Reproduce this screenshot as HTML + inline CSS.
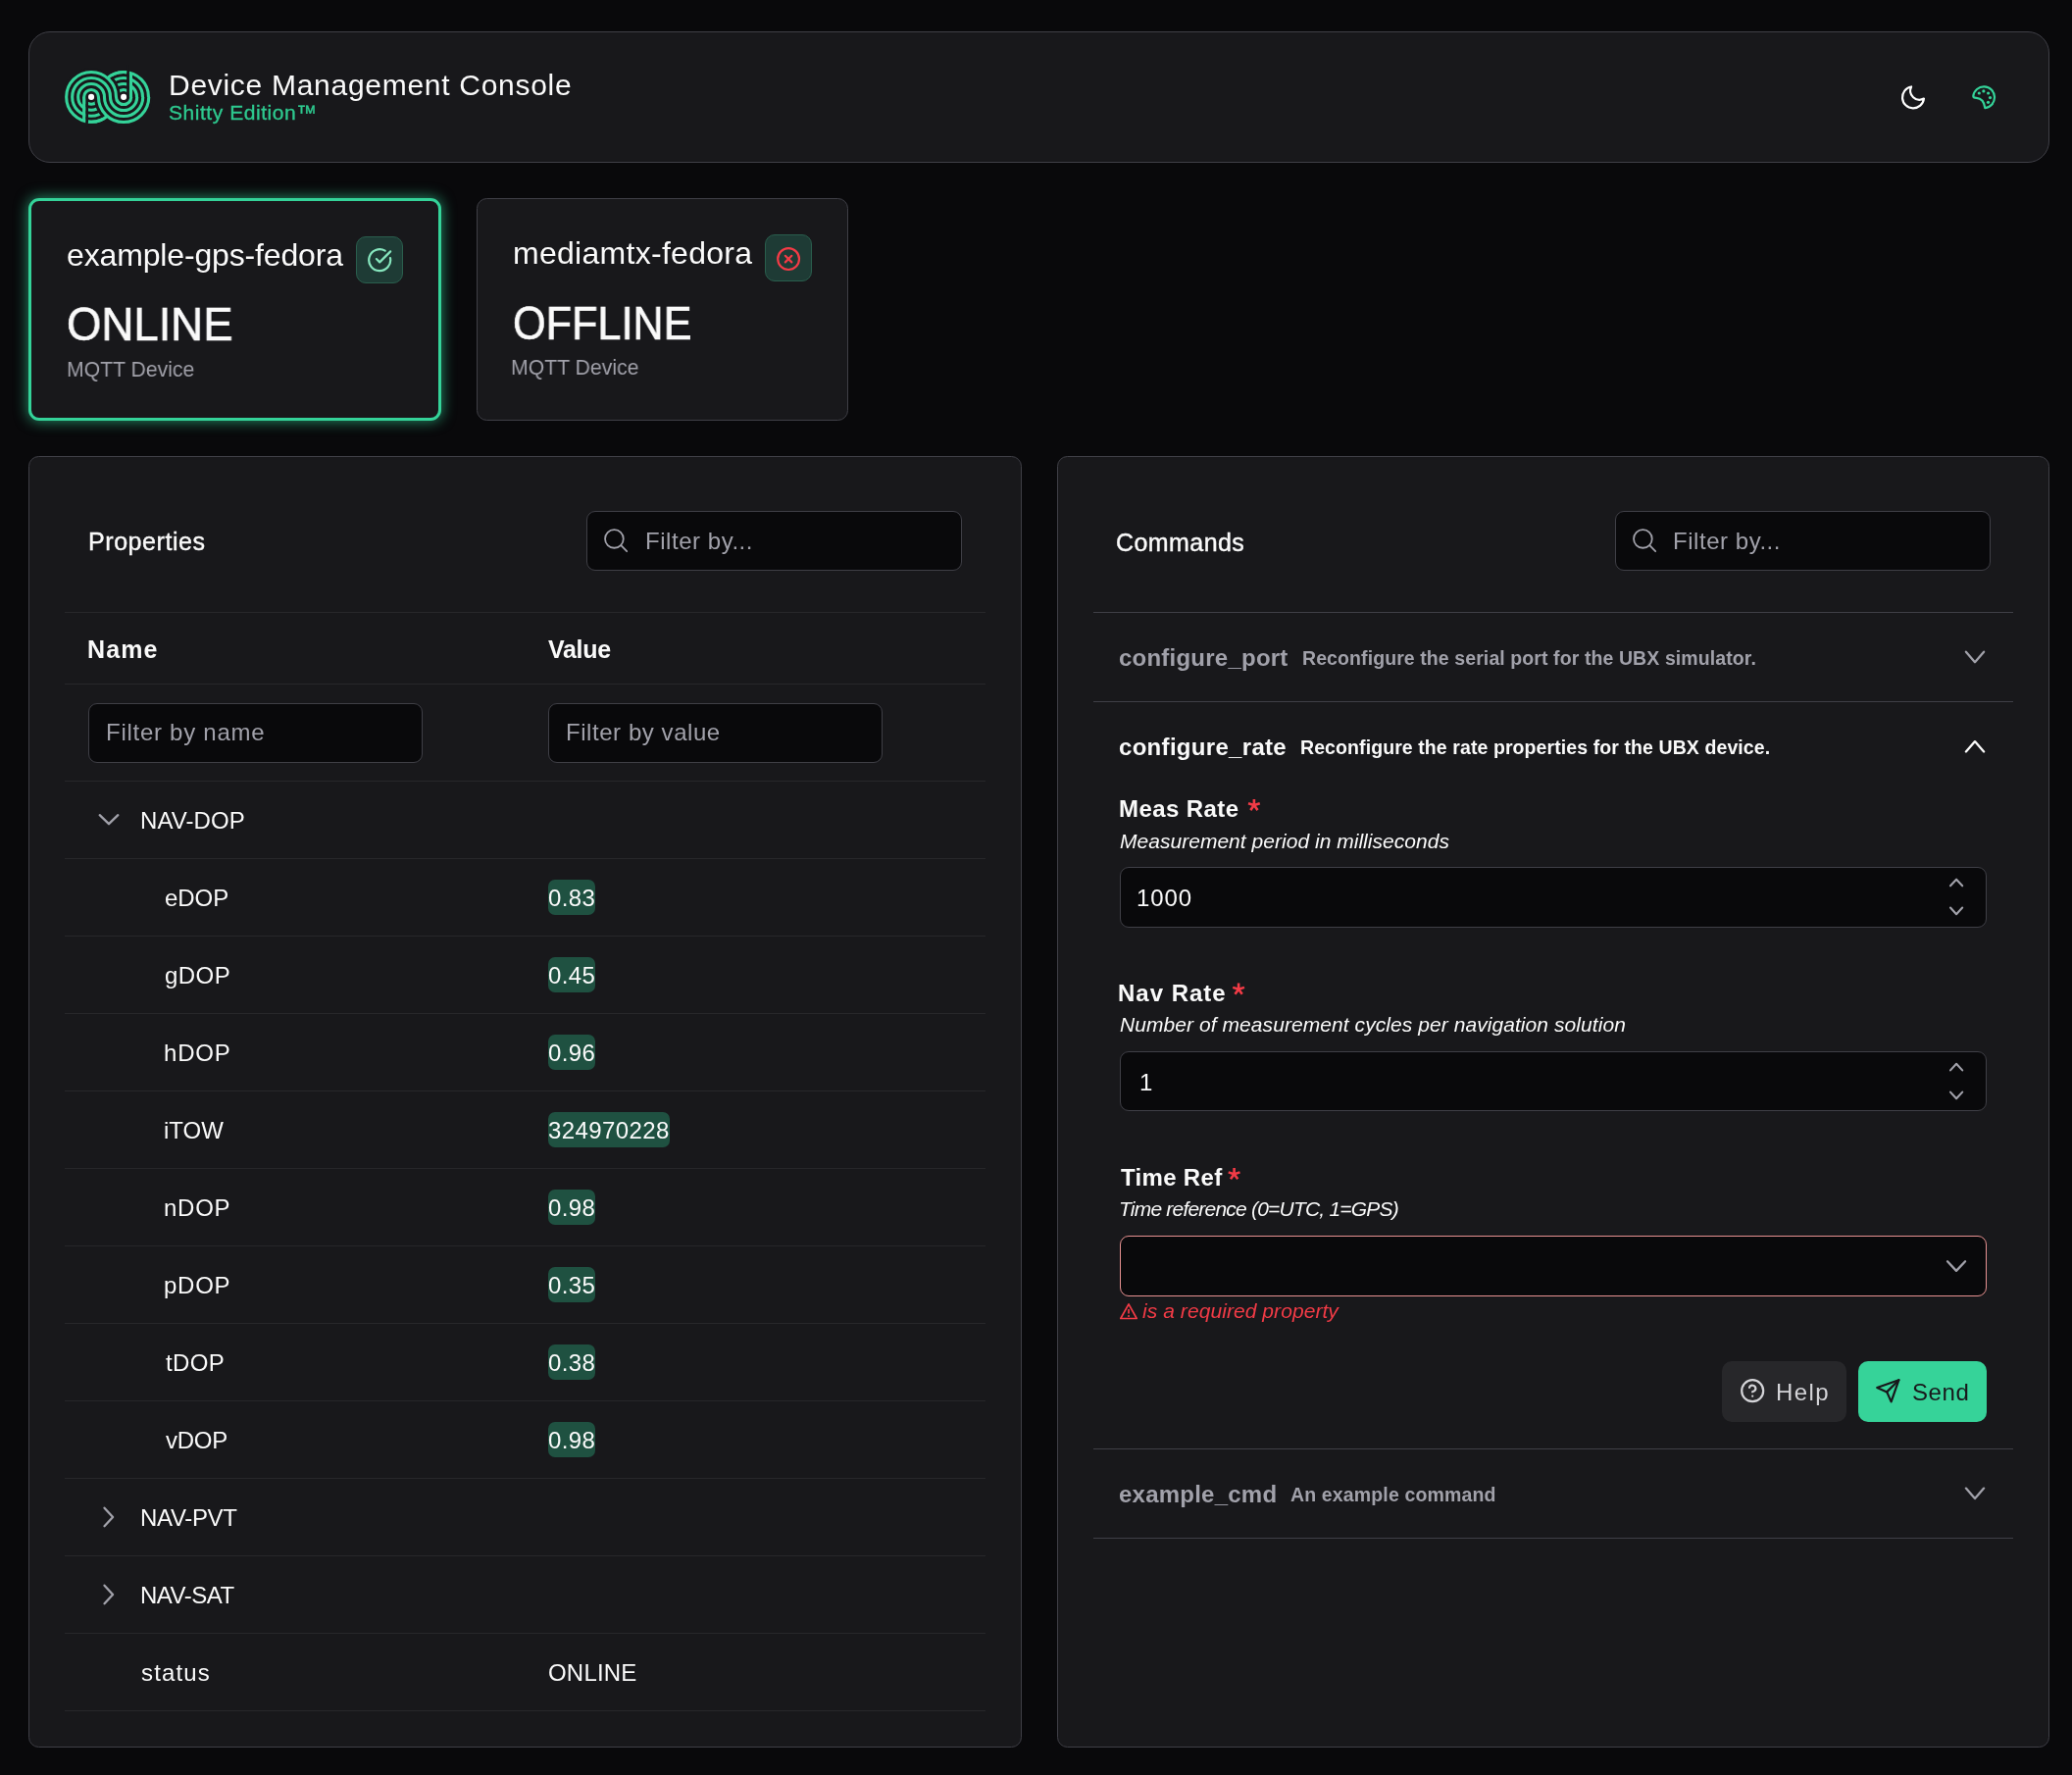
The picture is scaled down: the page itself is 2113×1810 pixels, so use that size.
<!DOCTYPE html>
<html><head><meta charset="utf-8"><title>Device Management Console</title>
<style>
html,body{margin:0;padding:0;}
body{width:2113px;height:1810px;background:#09090b;position:relative;overflow:hidden;font-family:"Liberation Sans",sans-serif;}
.b{position:absolute;}
.t{position:absolute;white-space:nowrap;line-height:1;will-change:transform;}
</style></head><body>
<div class="b" style="left:29px;top:32px;width:2061px;height:133.5px;background:#18181b;border:1px solid #3f3f46;border-radius:22px;box-sizing:border-box;"></div><svg class="b" style="left:60px;top:66px" width="100" height="66" viewBox="0 0 100 66">
<g fill="none" stroke="#34d399" stroke-width="3.1"><path d="M25.66 32.9 A7.4 7.4 0 0 0 40.46 32.9" /><path d="M58.70 32.9 A7.4 7.4 0 0 1 73.50 32.9" /><path d="M19.66 32.9 A13.4 13.4 0 0 0 46.46 32.9" /><path d="M52.70 32.9 A13.4 13.4 0 0 1 79.50 32.9" /><path d="M13.66 32.9 A19.4 19.4 0 0 0 52.46 32.9" /><path d="M46.70 32.9 A19.4 19.4 0 0 1 85.50 32.9" /><path d="M7.66 32.9 A25.4 25.4 0 0 0 58.46 32.9" /><path d="M40.70 32.9 A25.4 25.4 0 0 1 91.50 32.9" /></g>
<rect x="27.21" y="32.9" width="2.8" height="30" fill="#18181b"/>
<rect x="69.15" y="0" width="2.8" height="32.9" fill="#18181b"/>
<g fill="none" stroke="#18181b" stroke-width="8.7"><path d="M25.66 32.9 A7.4 7.4 0 0 1 40.46 32.9 A25.64 25.64 0 0 0 91.74 32.9" /><path d="M19.66 32.9 A13.4 13.4 0 0 1 46.46 32.9 A19.64 19.64 0 0 0 85.74 32.9" /><path d="M13.66 32.9 A19.4 19.4 0 0 1 52.46 32.9 A13.64 13.64 0 0 0 79.74 32.9" /><path d="M7.66 32.9 A25.4 25.4 0 0 1 58.46 32.9 A7.64 7.64 0 0 0 73.74 32.9" /></g>
<g fill="none" stroke="#34d399" stroke-width="3.1"><path d="M25.66 32.9 A7.4 7.4 0 0 1 40.46 32.9 A25.64 25.64 0 0 0 91.74 32.9" /><path d="M19.66 32.9 A13.4 13.4 0 0 1 46.46 32.9 A19.64 19.64 0 0 0 85.74 32.9" /><path d="M13.66 32.9 A19.4 19.4 0 0 1 52.46 32.9 A13.64 13.64 0 0 0 79.74 32.9" /><path d="M7.66 32.9 A25.4 25.4 0 0 1 58.46 32.9 A7.64 7.64 0 0 0 73.74 32.9" />
<path d="M25.66 32.9 V57.5"/><path d="M73.50 32.9 V8.3"/>
<path d="M49.58 13.6 A25.4 25.4 0 0 1 69.15 7.68"/><path d="M30.0 58.1 A25.4 25.4 0 0 0 49.58 52.2"/></g>
<circle cx="33.06" cy="32.9" r="3.05" fill="#fff"/><circle cx="66.1" cy="32.9" r="3.05" fill="#fff"/>
</svg><svg class="b" style="left:1933px;top:81px" width="36" height="36" viewBox="0 0 36 36"><path d="M16.07 7.46 A9.3 9.3 0 0 0 28.93 19.58 A11 11 0 1 1 16.07 7.46 Z" fill="none" stroke="#fff" stroke-width="2.2" stroke-linejoin="round"/></svg><svg class="b" style="left:2005px;top:81px" width="36" height="36" viewBox="0 0 36 36"><g fill="none" stroke="#34d399" stroke-width="2.2" stroke-linejoin="round" stroke-linecap="round"><path d="M7.3 17 A10.9 10.9 0 1 1 19.3 29.1 C18.6 23.5 15.5 19.3 10.5 18.9 C8.5 18.8 7.3 18.5 7.3 17 Z"/></g>
<g fill="#34d399"><circle cx="13.3" cy="14" r="1.6"/><circle cx="17.85" cy="11.9" r="1.6"/><circle cx="22.6" cy="14" r="1.6"/><circle cx="24.5" cy="18.6" r="1.6"/><circle cx="22.5" cy="23.3" r="1.6"/></g></svg><div class="b" style="left:29px;top:201.5px;width:421px;height:227.5px;background:#18181b;border:3px solid #34d399;border-radius:11px;box-sizing:border-box;box-shadow:0 0 14px 1px rgba(52,211,153,0.6);"></div><div class="b" style="left:486px;top:202px;width:379px;height:226.5px;background:#18181b;border:1px solid #3f3f46;border-radius:10.5px;box-sizing:border-box;"></div><div class="b" style="left:363px;top:241px;width:48px;height:48px;background:#1e3b35;border:1px solid #2a5e4d;border-radius:10px;box-sizing:border-box;"></div><svg class="b" style="left:373.7px;top:252.4px" width="26.4" height="26.4" viewBox="0 0 24 24"><g fill="none" stroke="#86e5bd" stroke-width="2" stroke-linecap="round" stroke-linejoin="round"><path d="M21.801 10A10 10 0 1 1 17 3.335"/><path d="m9 11 3 3L22 4"/></g></svg><div class="b" style="left:780px;top:239px;width:48px;height:48px;background:#1e3b35;border:1px solid #2a5e4d;border-radius:10px;box-sizing:border-box;"></div><svg class="b" style="left:791.2px;top:250.7px" width="26.2" height="26.2" viewBox="0 0 24 24"><g fill="none" stroke="#f23b46" stroke-width="2" stroke-linecap="round" stroke-linejoin="round"><circle cx="12" cy="12" r="10"/><path d="m15 9-6 6"/><path d="m9 9 6 6"/></g></svg><div class="b" style="left:29px;top:465px;width:1013px;height:1316.5px;background:#18181b;border:1px solid #3f3f46;border-radius:10.5px;box-sizing:border-box;"></div><div class="b" style="left:1078px;top:465px;width:1012px;height:1316.5px;background:#18181b;border:1px solid #3f3f46;border-radius:10.5px;box-sizing:border-box;"></div><div class="b" style="left:598px;top:520.5px;width:383px;height:61.5px;background:#09090b;border:1px solid #3f3f46;border-radius:9px;box-sizing:border-box;"></div><svg class="b" style="left:598px;top:520.5px" width="60" height="60" viewBox="0 0 60 60"><g fill="none" stroke="#a1a1aa" stroke-width="1.8" stroke-linecap="round"><circle cx="28.399999999999977" cy="28.399999999999977" r="9.35"/><path d="M35.299999999999955 35.200000000000045 L41.200000000000045 41.200000000000045"/></g></svg><div class="b" style="left:1647px;top:520.5px;width:383px;height:61.5px;background:#09090b;border:1px solid #3f3f46;border-radius:9px;box-sizing:border-box;"></div><svg class="b" style="left:1647px;top:520.5px" width="60" height="60" viewBox="0 0 60 60"><g fill="none" stroke="#a1a1aa" stroke-width="1.8" stroke-linecap="round"><circle cx="28.399999999999977" cy="28.399999999999977" r="9.35"/><path d="M35.299999999999955 35.200000000000045 L41.200000000000045 41.200000000000045"/></g></svg><div class="b" style="left:66px;top:624px;width:939px;height:1px;background:#27272a;"></div><div class="b" style="left:66px;top:697px;width:939px;height:1px;background:#27272a;"></div><div class="b" style="left:90px;top:716.5px;width:340.5px;height:61.0px;background:#09090b;border:1px solid #3f3f46;border-radius:9px;box-sizing:border-box;"></div><div class="b" style="left:559px;top:716.5px;width:340.5px;height:61.0px;background:#09090b;border:1px solid #3f3f46;border-radius:9px;box-sizing:border-box;"></div><div class="b" style="left:66px;top:796.2px;width:939px;height:1.0px;background:#27272a;"></div><div class="b" style="left:66px;top:875.2px;width:939px;height:1.0px;background:#27272a;"></div><div class="b" style="left:66px;top:954.2px;width:939px;height:1.0px;background:#27272a;"></div><div class="b" style="left:66px;top:1033.2px;width:939px;height:1.0px;background:#27272a;"></div><div class="b" style="left:66px;top:1112.2px;width:939px;height:1.0px;background:#27272a;"></div><div class="b" style="left:66px;top:1191.2px;width:939px;height:1.0px;background:#27272a;"></div><div class="b" style="left:66px;top:1270.2px;width:939px;height:1.0px;background:#27272a;"></div><div class="b" style="left:66px;top:1349.2px;width:939px;height:1.0px;background:#27272a;"></div><div class="b" style="left:66px;top:1428.2px;width:939px;height:1.0px;background:#27272a;"></div><div class="b" style="left:66px;top:1507.2px;width:939px;height:1.0px;background:#27272a;"></div><div class="b" style="left:66px;top:1586.2px;width:939px;height:1.0px;background:#27272a;"></div><div class="b" style="left:66px;top:1665.2px;width:939px;height:1.0px;background:#27272a;"></div><div class="b" style="left:66px;top:1744.2px;width:939px;height:1.0px;background:#27272a;"></div><svg class="b" style="left:0;top:0;overflow:visible" width="1" height="1"><path d="M101.70 831.20 L111.00 840.20 L120.30 831.20" fill="none" stroke="#a1a1aa" stroke-width="2.3" stroke-linecap="round" stroke-linejoin="round"/></svg><svg class="b" style="left:0;top:0;overflow:visible" width="1" height="1"><path d="M106.50 1537.70 L115.10 1547.00 L106.50 1556.20" fill="none" stroke="#a1a1aa" stroke-width="2.3" stroke-linecap="round" stroke-linejoin="round"/></svg><svg class="b" style="left:0;top:0;overflow:visible" width="1" height="1"><path d="M106.50 1616.70 L115.10 1626.00 L106.50 1635.20" fill="none" stroke="#a1a1aa" stroke-width="2.3" stroke-linecap="round" stroke-linejoin="round"/></svg><div class="b" style="left:559px;top:896.8000000000001px;width:48px;height:36.0px;background:#1f5141;border-radius:7px;"></div><div class="b" style="left:559px;top:975.8000000000001px;width:48px;height:36.0px;background:#1f5141;border-radius:7px;"></div><div class="b" style="left:559px;top:1054.8px;width:48px;height:36.0px;background:#1f5141;border-radius:7px;"></div><div class="b" style="left:559px;top:1133.8px;width:124px;height:36.0px;background:#1f5141;border-radius:7px;"></div><div class="b" style="left:559px;top:1212.8px;width:48px;height:36.0px;background:#1f5141;border-radius:7px;"></div><div class="b" style="left:559px;top:1291.8px;width:48px;height:36.0px;background:#1f5141;border-radius:7px;"></div><div class="b" style="left:559px;top:1370.8px;width:48px;height:36.0px;background:#1f5141;border-radius:7px;"></div><div class="b" style="left:559px;top:1449.8px;width:48px;height:36.0px;background:#1f5141;border-radius:7px;"></div><div class="b" style="left:1115px;top:624px;width:938px;height:1px;background:#3f3f46;"></div><div class="b" style="left:1115px;top:715.3px;width:938px;height:1.0px;background:#3f3f46;"></div><div class="b" style="left:1115px;top:1477px;width:938px;height:1px;background:#3f3f46;"></div><div class="b" style="left:1115px;top:1568.4px;width:938px;height:1.0px;background:#3f3f46;"></div><svg class="b" style="left:0;top:0;overflow:visible" width="1" height="1"><path d="M2004.90 664.70 L2014.00 675.20 L2023.10 664.70" fill="none" stroke="#a1a1aa" stroke-width="2.3" stroke-linecap="round" stroke-linejoin="round"/></svg><svg class="b" style="left:0;top:0;overflow:visible" width="1" height="1"><path d="M2004.90 766.50 L2014.00 756.10 L2023.10 766.50" fill="none" stroke="#fafafa" stroke-width="2.3" stroke-linecap="round" stroke-linejoin="round"/></svg><svg class="b" style="left:0;top:0;overflow:visible" width="1" height="1"><path d="M2004.90 1517.60 L2014.00 1528.10 L2023.10 1517.60" fill="none" stroke="#a1a1aa" stroke-width="2.3" stroke-linecap="round" stroke-linejoin="round"/></svg><div class="b" style="left:1142px;top:884.2px;width:884px;height:61.39999999999998px;background:#09090b;border:1px solid #3f3f46;border-radius:9px;box-sizing:border-box;"></div><svg class="b" style="left:0;top:0;overflow:visible" width="1" height="1"><path d="M1989.00 903.30 L1995.10 896.70 L2001.20 903.30" fill="none" stroke="#a1a1aa" stroke-width="2.1" stroke-linecap="round" stroke-linejoin="round"/></svg><svg class="b" style="left:0;top:0;overflow:visible" width="1" height="1"><path d="M1989.00 925.50 L1995.10 932.20 L2001.20 925.50" fill="none" stroke="#a1a1aa" stroke-width="2.1" stroke-linecap="round" stroke-linejoin="round"/></svg><div class="b" style="left:1142px;top:1072.3px;width:884px;height:61.200000000000045px;background:#09090b;border:1px solid #3f3f46;border-radius:9px;box-sizing:border-box;"></div><svg class="b" style="left:0;top:0;overflow:visible" width="1" height="1"><path d="M1989.00 1091.40 L1995.10 1084.80 L2001.20 1091.40" fill="none" stroke="#a1a1aa" stroke-width="2.1" stroke-linecap="round" stroke-linejoin="round"/></svg><svg class="b" style="left:0;top:0;overflow:visible" width="1" height="1"><path d="M1989.00 1113.60 L1995.10 1120.30 L2001.20 1113.60" fill="none" stroke="#a1a1aa" stroke-width="2.1" stroke-linecap="round" stroke-linejoin="round"/></svg><div class="b" style="left:1142px;top:1260.2px;width:884px;height:61.59999999999991px;background:#09090b;border:1px solid #e79191;border-radius:9px;box-sizing:border-box;"></div><svg class="b" style="left:0;top:0;overflow:visible" width="1" height="1"><path d="M1986.00 1286.30 L1995.00 1295.90 L2004.10 1286.30" fill="none" stroke="#a1a1aa" stroke-width="2.3" stroke-linecap="round" stroke-linejoin="round"/></svg><svg class="b" style="left:1140px;top:1327px" width="22" height="20" viewBox="0 0 22 20"><g fill="none" stroke="#f23b46" stroke-width="1.7" stroke-linejoin="round"><path d="M11 2.8 L19.2 17.5 H2.8 Z"/></g><path d="M11 8 V12.5" stroke="#f23b46" stroke-width="1.7"/><circle cx="11" cy="14.9" r="1" fill="#f23b46"/></svg><div class="b" style="left:1756.2px;top:1388px;width:126.79999999999995px;height:62px;background:#27272a;border-radius:10px;"></div><svg class="b" style="left:1773.9px;top:1405.2px" width="26.4" height="26.4" viewBox="0 0 24 24"><g fill="none" stroke="#d4d4d8" stroke-width="2" stroke-linecap="round" stroke-linejoin="round"><circle cx="12" cy="12" r="10"/><path d="M9.09 9a3 3 0 0 1 5.83 1c0 2-3 3-3 3"/><path d="M12 17h.01"/></g></svg><div class="b" style="left:1895px;top:1388px;width:131px;height:62px;background:#36d399;border-radius:10px;"></div><svg class="b" style="left:1912.2px;top:1404.9px" width="26.6" height="26.6" viewBox="0 0 24 24"><g fill="none" stroke="#18181b" stroke-width="2" stroke-linecap="round" stroke-linejoin="round"><path d="m22 2-7 20-4-9-9-4Z"/><path d="M22 2 11 13"/></g></svg><div class="t" id="title" style="left:172.20px;top:72.00px;font-size:30px;color:#fafafa;letter-spacing:0.712px;">Device Management Console</div><div class="t" id="sub" style="left:171.80px;top:103.75px;font-size:21px;color:#2ec98f;letter-spacing:0.543px;-webkit-text-stroke:0.35px #2ec98f;">Shitty Edition™</div><div class="t" id="d1name" style="left:68.00px;top:244.10px;font-size:32px;color:#fafafa;letter-spacing:-0.153px;">example-gps-fedora</div><div class="t" id="d1stat" style="left:68.40px;top:306.93px;font-size:47.5px;color:#fafafa;-webkit-text-stroke:0.7px #fafafa;transform:scaleX(0.9584);transform-origin:0 0;">ONLINE</div><div class="t" id="d1type" style="left:67.60px;top:365.68px;font-size:22.5px;color:#a1a1aa;transform:scaleX(0.9423);transform-origin:0 0;">MQTT Device</div><div class="t" id="d2name" style="left:523.20px;top:242.00px;font-size:32px;color:#fafafa;letter-spacing:0.286px;">mediamtx-fedora</div><div class="t" id="d2stat" style="left:523.20px;top:305.73px;font-size:47.5px;color:#fafafa;-webkit-text-stroke:0.7px #fafafa;transform:scaleX(0.9097);transform-origin:0 0;">OFFLINE</div><div class="t" id="d2type" style="left:521.40px;top:363.68px;font-size:22.5px;color:#a1a1aa;transform:scaleX(0.9437);transform-origin:0 0;">MQTT Device</div><div class="t" id="props" style="left:89.50px;top:540.35px;font-size:25px;color:#fafafa;letter-spacing:0.567px;-webkit-text-stroke:0.4px #fafafa;">Properties</div><div class="t" id="filt1" style="left:658.40px;top:540.20px;font-size:24px;color:#a1a1aa;letter-spacing:0.536px;">Filter by...</div><div class="t" id="hname" style="left:89.20px;top:649.55px;font-size:25px;color:#fafafa;font-weight:700;letter-spacing:1.133px;">Name</div><div class="t" id="hval" style="left:559.40px;top:649.55px;font-size:25px;color:#fafafa;font-weight:700;letter-spacing:-0.300px;">Value</div><div class="t" id="fname" style="left:108.00px;top:735.40px;font-size:24px;color:#a1a1aa;letter-spacing:0.731px;">Filter by name</div><div class="t" id="fval" style="left:576.80px;top:735.40px;font-size:24px;color:#a1a1aa;letter-spacing:0.557px;">Filter by value</div><div class="t" id="navdop" style="left:143.20px;top:825.20px;font-size:24px;color:#fafafa;letter-spacing:0.083px;">NAV-DOP</div><div class="t" id="r_eDOP" style="left:167.60px;top:904.00px;font-size:24px;color:#fafafa;letter-spacing:-0.067px;">eDOP</div><div class="t" id="v_eDOP" style="left:559.00px;top:904.00px;font-size:24px;color:#fafafa;letter-spacing:0.367px;">0.83</div><div class="t" id="r_gDOP" style="left:167.60px;top:983.00px;font-size:24px;color:#fafafa;letter-spacing:0.467px;">gDOP</div><div class="t" id="v_gDOP" style="left:559.00px;top:983.00px;font-size:24px;color:#fafafa;letter-spacing:0.367px;">0.45</div><div class="t" id="r_hDOP" style="left:166.60px;top:1062.00px;font-size:24px;color:#fafafa;letter-spacing:0.800px;">hDOP</div><div class="t" id="v_hDOP" style="left:559.00px;top:1062.00px;font-size:24px;color:#fafafa;letter-spacing:0.367px;">0.96</div><div class="t" id="r_iTOW" style="left:166.60px;top:1141.00px;font-size:24px;color:#fafafa;">iTOW</div><div class="t" id="v_iTOW" style="left:559.00px;top:1141.00px;font-size:24px;color:#fafafa;letter-spacing:0.388px;">324970228</div><div class="t" id="r_nDOP" style="left:166.60px;top:1220.00px;font-size:24px;color:#fafafa;letter-spacing:0.733px;">nDOP</div><div class="t" id="v_nDOP" style="left:559.00px;top:1220.00px;font-size:24px;color:#fafafa;letter-spacing:0.367px;">0.98</div><div class="t" id="r_pDOP" style="left:166.60px;top:1299.00px;font-size:24px;color:#fafafa;letter-spacing:0.733px;">pDOP</div><div class="t" id="v_pDOP" style="left:559.00px;top:1299.00px;font-size:24px;color:#fafafa;letter-spacing:0.367px;">0.35</div><div class="t" id="r_tDOP" style="left:168.60px;top:1378.00px;font-size:24px;color:#fafafa;letter-spacing:0.400px;">tDOP</div><div class="t" id="v_tDOP" style="left:559.00px;top:1378.00px;font-size:24px;color:#fafafa;letter-spacing:0.367px;">0.38</div><div class="t" id="r_vDOP" style="left:168.60px;top:1457.00px;font-size:24px;color:#fafafa;letter-spacing:-0.267px;">vDOP</div><div class="t" id="v_vDOP" style="left:559.00px;top:1457.00px;font-size:24px;color:#fafafa;letter-spacing:0.367px;">0.98</div><div class="t" id="navpvt" style="left:142.70px;top:1536.00px;font-size:24px;color:#fafafa;letter-spacing:-0.333px;">NAV-PVT</div><div class="t" id="navsat" style="left:142.70px;top:1615.00px;font-size:24px;color:#fafafa;letter-spacing:-0.500px;">NAV-SAT</div><div class="t" id="status" style="left:143.70px;top:1694.00px;font-size:24px;color:#fafafa;letter-spacing:1.160px;">status</div><div class="t" id="statusv" style="left:558.60px;top:1694.00px;font-size:24px;color:#fafafa;letter-spacing:0.200px;">ONLINE</div><div class="t" id="cmds" style="left:1138.00px;top:540.75px;font-size:25px;color:#fafafa;letter-spacing:0.429px;-webkit-text-stroke:0.4px #fafafa;">Commands</div><div class="t" id="filt2" style="left:1706.40px;top:540.20px;font-size:24px;color:#a1a1aa;letter-spacing:0.536px;">Filter by...</div><div class="t" id="c1" style="left:1141.00px;top:659.20px;font-size:24px;color:#a1a1aa;font-weight:700;letter-spacing:0.231px;">configure_port</div><div class="t" id="c1d" style="left:1327.80px;top:661.92px;font-size:19.5px;color:#a1a1aa;font-weight:700;letter-spacing:0.092px;">Reconfigure the serial port for the UBX simulator.</div><div class="t" id="c2" style="left:1141.00px;top:750.10px;font-size:24px;color:#fafafa;font-weight:700;letter-spacing:0.308px;">configure_rate</div><div class="t" id="c2d" style="left:1326.20px;top:752.62px;font-size:19.5px;color:#fafafa;font-weight:700;letter-spacing:0.090px;">Reconfigure the rate properties for the UBX device.</div><div class="t" id="lab1" style="left:1140.80px;top:812.80px;font-size:24px;color:#fafafa;font-weight:700;letter-spacing:0.425px;">Meas Rate</div><div class="t" id="desc1" style="left:1141.80px;top:846.65px;font-size:21px;color:#fafafa;font-style:italic;letter-spacing:0.027px;">Measurement period in milliseconds</div><div class="t" id="in1" style="left:1159.40px;top:903.90px;font-size:24px;color:#fafafa;letter-spacing:0.867px;">1000</div><div class="t" id="lab2" style="left:1139.80px;top:1000.50px;font-size:24px;color:#fafafa;font-weight:700;letter-spacing:0.986px;">Nav Rate</div><div class="t" id="desc2" style="left:1141.80px;top:1033.95px;font-size:21px;color:#fafafa;font-style:italic;letter-spacing:0.067px;">Number of measurement cycles per navigation solution</div><div class="t" id="in2" style="left:1161.60px;top:1092.00px;font-size:24px;color:#fafafa;">1</div><div class="t" id="lab3" style="left:1142.60px;top:1189.00px;font-size:24px;color:#fafafa;font-weight:700;letter-spacing:0.314px;">Time Ref</div><div class="t" id="desc3" style="left:1141.40px;top:1222.15px;font-size:21px;color:#fafafa;font-style:italic;letter-spacing:-0.793px;">Time reference (0=UTC, 1=GPS)</div><div class="t" id="err" style="left:1165.00px;top:1325.85px;font-size:21px;color:#f23b46;font-style:italic;letter-spacing:0.067px;">is a required property</div><div class="t" id="help" style="left:1811.20px;top:1408.00px;font-size:24px;color:#d4d4d8;letter-spacing:1.400px;">Help</div><div class="t" id="send" style="left:1950.20px;top:1408.00px;font-size:24px;color:#18181b;letter-spacing:0.600px;">Send</div><div class="t" id="c3" style="left:1141.00px;top:1511.60px;font-size:24px;color:#a1a1aa;font-weight:700;letter-spacing:0.230px;">example_cmd</div><div class="t" id="c3d" style="left:1315.80px;top:1514.72px;font-size:19.5px;color:#a1a1aa;font-weight:700;letter-spacing:0.147px;">An example command</div><svg class="b" style="left:0;top:0;overflow:visible" width="1" height="1"><path d="M1278.90 821.10 L1278.90 814.90 M1278.90 821.10 L1284.80 819.18 M1278.90 821.10 L1282.54 826.12 M1278.90 821.10 L1275.26 826.12 M1278.90 821.10 L1273.00 819.18 " stroke="#f23b46" stroke-width="2.6" fill="none"/></svg><svg class="b" style="left:0;top:0;overflow:visible" width="1" height="1"><path d="M1263.10 1008.80 L1263.10 1002.60 M1263.10 1008.80 L1269.00 1006.88 M1263.10 1008.80 L1266.74 1013.82 M1263.10 1008.80 L1259.46 1013.82 M1263.10 1008.80 L1257.20 1006.88 " stroke="#f23b46" stroke-width="2.6" fill="none"/></svg><svg class="b" style="left:0;top:0;overflow:visible" width="1" height="1"><path d="M1258.60 1197.30 L1258.60 1191.10 M1258.60 1197.30 L1264.50 1195.38 M1258.60 1197.30 L1262.24 1202.32 M1258.60 1197.30 L1254.96 1202.32 M1258.60 1197.30 L1252.70 1195.38 " stroke="#f23b46" stroke-width="2.6" fill="none"/></svg>
</body></html>
